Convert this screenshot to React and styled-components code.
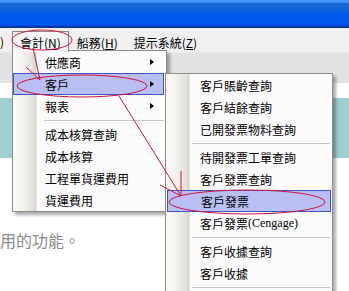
import React from "react";
import styled, { createGlobalStyle } from "styled-components";

const GlobalStyle = createGlobalStyle`
  html, body {
    margin: 0;
    padding: 0;
    background: #fff;
  }
  body {
    font-family: "Noto Sans CJK TC", "Liberation Sans", sans-serif;
  }
`;

const Window = styled.div`
  position: relative;
  width: 349px;
  height: 291px;
  overflow: hidden;
  display: flex;
  flex-direction: column;
  background: #fff;
`;

const TitleBar = styled.div`
  flex: none;
  height: 28px;
  background: linear-gradient(
    to bottom,
    #4a98f8 0px,
    #3a8af2 3px,
    #1a6ad6 3px,
    #1264d8 8px,
    #065ce6 13px,
    #0058ee 14px,
    #0058ee 25px,
    #0040b8 26px,
    #00309a 28px
  );
`;

const MenuBar = styled.div`
  flex: none;
  height: 24px;
  display: flex;
  align-items: stretch;
  background: #f0f0f0;
  font-size: 12px;
  color: #000;
`;

const MenuStub = styled.div`
  width: 12px;
  overflow: hidden;
  display: flex;
  justify-content: flex-end;
  align-items: center;
  white-space: nowrap;
  padding-top: 3px;
  span {
    padding-right: 8px;
  }
`;

const MenuTitle = styled.div`
  display: flex;
  align-items: center;
  margin-top: 3px;
  padding: 0 7px 0 7px;
  white-space: nowrap;
  border: 1px solid ${(p) => (p.$open ? "#8d8d8d" : "transparent")};
  border-bottom: none;
  background: ${(p) => (p.$open ? "#f6f6f6" : "transparent")};
  position: relative;
  z-index: ${(p) => (p.$open ? 3 : 0)};
  u {
    text-decoration: underline;
  }
`;

const ToolBand = styled.div`
  flex: none;
  height: 31px;
  background: #e2e2e2;
  border-top: 1px solid #e9e9e9;
  box-sizing: border-box;
`;

const Content = styled.div`
  flex: 1;
  padding-top: 15px;
  display: flex;
  flex-direction: column;
`;

const TealStrip = styled.div`
  height: 60px;
  background: #9fcfd0;
`;

const HintText = styled.div`
  margin-top: 74px;
  font-size: 16px;
  line-height: 16px;
  color: #8a8a8a;
  white-space: nowrap;
`;

const DropMenu = styled.div`
  position: absolute;
  left: ${(p) => p.$left}px;
  top: ${(p) => p.$top}px;
  width: ${(p) => p.$width}px;
  box-sizing: border-box;
  border: 1px solid #8d8d8d;
  background: linear-gradient(
      to right,
      #fbfbf9 0px,
      #f3f3ee 10px,
      #e2e2da 20px,
      #d4d4cb 23px,
      #fcfcfc 24px,
      #fcfcfc 100%
    );
  box-shadow: 3px 3px 3px rgba(0, 0, 0, 0.33);
  font-size: 12px;
  color: #000;
  z-index: ${(p) => p.$layer};
  padding-bottom: ${(p) => p.$tail || 0}px;
`;

const MenuRow = styled.div`
  position: relative;
  height: 22px;
  box-sizing: border-box;
  display: flex;
  align-items: center;
  padding-left: ${(p) => p.$indent}px;
  margin-right: ${(p) => p.$inset}px;
  margin-left: ${(p) => (p.$shift ? 1 : 0)}px;
  white-space: nowrap;
  border: 1px solid ${(p) => (p.$active ? "#3d56c4" : "transparent")};
  background: ${(p) => (p.$active ? "#b9bff3" : "transparent")};
  .latin {
    font-family: "Liberation Serif", serif;
    font-size: 12px;
  }
`;

const SubArrow = styled.span`
  position: absolute;
  right: 9px;
  top: 7px;
  width: 0;
  height: 0;
  border-top: 3.5px solid transparent;
  border-bottom: 3.5px solid transparent;
  border-left: 4px solid #000;
`;

const Separator = styled.div`
  height: 6px;
  display: flex;
  align-items: center;
  padding-left: ${(p) => p.$from}px;
  padding-right: 2px;
  &::after {
    content: "";
    flex: 1;
    height: 1px;
    background: #c6c6c6;
  }
`;

const Annotations = styled.svg`
  position: absolute;
  left: 0;
  top: 0;
  pointer-events: none;
  z-index: 10;
`;

const leftItems = [
  { label: "供應商", sub: true },
  { label: "客戶", sub: true, active: true },
  { label: "報表", sub: true },
  { sep: true },
  { label: "成本核算查詢" },
  { label: "成本核算" },
  { label: "工程單貨運費用" },
  { label: "貨運費用" },
];

const rightItems = [
  { label: "客戶賬齡查詢" },
  { label: "客戶結餘查詢" },
  { label: "已開發票物料查詢" },
  { sep: true },
  { label: "待開發票工單查詢" },
  { label: "客戶發票查詢" },
  { label: "客戶發票", active: true },
  { label: "客戶發票", latin: "(Cengage)" },
  { sep: true },
  { label: "客戶收據查詢" },
  { label: "客戶收據" },
  { sep: true },
];

function Menu({ items, left, top, width, indent, inset, sepFrom, layer, tail, shift }) {
  return (
    <DropMenu $left={left} $top={top} $width={width} $layer={layer} $tail={tail}>
      {items.map((it, i) =>
        it.sep ? (
          <Separator key={i} $from={sepFrom} />
        ) : (
          <MenuRow
            key={i}
            $active={it.active}
            $indent={indent}
            $inset={inset}
            $shift={shift && it.active}
          >
            {it.label}
            {it.latin && <span className="latin">{it.latin}</span>}
            {it.sub && <SubArrow />}
          </MenuRow>
        )
      )}
    </DropMenu>
  );
}

const RED = "#d3123e";

export default function App() {
  return (
    <>
      <GlobalStyle />
      <Window>
        <TitleBar />
        <MenuBar>
          <MenuStub>
            <span>檔案(S)</span>
          </MenuStub>
          <MenuTitle $open>
            會計(<u>N</u>)
          </MenuTitle>
          <MenuTitle>
            船務(<u>H</u>)
          </MenuTitle>
          <MenuTitle>
            提示系統(<u>Z</u>)
          </MenuTitle>
        </MenuBar>
        <ToolBand />
        <Content>
          <TealStrip />
          <HintText>用的功能。</HintText>
        </Content>

        <Menu
          items={leftItems}
          left={12}
          top={50}
          width={155}
          indent={31}
          inset={2}
          sepFrom={31}
          layer={2}
        />
        <Menu
          items={rightItems}
          left={165}
          top={73}
          width={168}
          indent={33}
          inset={1}
          sepFrom={26}
          layer={4}
          tail={20}
          shift
        />

        <Annotations width="349" height="291" viewBox="0 0 349 291">
          <g fill="none" stroke={RED} strokeWidth="1">
            <ellipse cx="42" cy="40" rx="30" ry="10" />
            <ellipse cx="82" cy="86" rx="65" ry="11" />
            <ellipse cx="247" cy="202" rx="78" ry="12" />
            <line x1="33" y1="48" x2="40" y2="80" />
            <line x1="26" y1="67" x2="40" y2="80" />
            <line x1="119" y1="96" x2="181" y2="196" />
            <line x1="160" y1="185" x2="181" y2="196" />
            <line x1="181" y1="171" x2="181" y2="196" />
          </g>
        </Annotations>
      </Window>
    </>
  );
}
